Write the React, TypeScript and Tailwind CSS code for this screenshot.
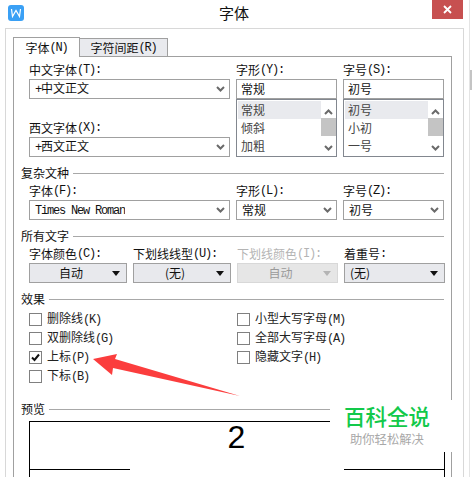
import type { ReactNode } from "react";

const simsun = "font-['Noto_Sans_CJK_SC','Liberation_Mono',sans-serif]";

// latin part of a label is tall and narrow, like the bitmap font in the dialog
const Key = ({ children }: { children: ReactNode }) => (
  <span className="font-['Liberation_Mono',monospace] text-[12px] tracking-[-1.2px]">{children}</span>
);

const Label = ({ text, hot, muted }: { text: string; hot?: string; muted?: boolean }) => (
  <div className={`h-[12px] flex items-center text-[12px] leading-[12px] whitespace-nowrap ${muted ? "text-[#b4b4b4]" : "text-[#111]"}`}>
    {text}
    {hot && <Key>({hot})</Key>}
    <Key>:</Key>
  </div>
);

const Chevron = () => (
  <svg width="9" height="6" viewBox="0 0 9 6" className="shrink-0">
    <path d="M1 1l3.5 3.5L8 1" fill="none" stroke="#6a6a6a" strokeWidth="2" />
  </svg>
);

const Select = ({ children, className = "" }: { children: ReactNode; className?: string }) => (
  <div className={`h-[20px] flex items-center justify-between border border-[#a0a0a0] bg-white pl-[5px] pr-[4px] text-[12px] text-[#111] ${className}`}>
    <span className="truncate">{children}</span>
    <Chevron />
  </div>
);

const Dropdown = ({ value, muted, left }: { value: string; muted?: boolean; left?: boolean }) => (
  <div className={`relative h-[20px] flex items-center border text-[12px] ${muted ? "border-[#d8d8d8] bg-[#e6e6e6] text-[#9a9a9a]" : "border-[#a0a0a0] bg-[#e8e9ed] text-[#111]"} ${left ? "pl-[5px]" : "justify-center pr-[14px]"}`}>
    {value}
    <span className={`absolute right-[6px] top-[7px] w-0 h-0 border-x-[4px] border-x-transparent border-t-[5px] ${muted ? "border-t-[#b4b4b4]" : "border-t-[#111]"}`} />
  </div>
);

const Heading = ({ text }: { text: string }) => (
  <div className="h-[14px] flex items-center gap-[4px] text-[12px] text-[#111]">
    <span className="whitespace-nowrap">{text}</span>
    <div className="flex-1 h-px bg-[#a8a8a8]" />
  </div>
);

const ListBox = ({ items }: { items: string[] }) => (
  <div className="h-[58px] flex border border-[#82878f] pt-[1px] pl-[1px] text-[12px] text-[#444]">
    <div className="flex-1 flex flex-col">
      {items.map((item, i) => (
        <div key={item} className={`h-[18px] leading-[18px] pl-[3px] ${i === 0 ? "bg-[#e9eaee]" : ""}`}>
          {item}
        </div>
      ))}
    </div>
    <div className="w-[15px] flex flex-col items-center">
      <svg width="9" height="6" viewBox="0 0 9 6" className="mt-[8px]">
        <path d="M1 5l3.5-3.5L8 5" fill="none" stroke="#6a6a6a" strokeWidth="2" />
      </svg>
      <div className="w-[15px] h-[18px] mt-[3px] bg-[#c4c4c4]" />
      <div className="mt-[9px]">
        <Chevron />
      </div>
    </div>
  </div>
);

const Check = ({ text, hot, checked }: { text: string; hot: string; checked?: boolean }) => (
  <div className="h-[14px] flex items-center gap-[5px] text-[12px] text-[#222]">
    <div className="w-[13px] h-[13px] border border-[#808080] flex items-center justify-center shrink-0">
      {checked && (
        <svg width="9" height="9" viewBox="0 0 9 9">
          <path d="M1 4.5l2.5 2.5L8 1.5" fill="none" stroke="#111" strokeWidth="2" />
        </svg>
      )}
    </div>
    <span className="whitespace-nowrap">
      {text}
      <Key>({hot})</Key>
    </span>
  </div>
);

const App = () => {
  return (
    <div className={`relative w-[472px] h-[477px] overflow-hidden bg-white ${simsun}`}>
      {/* title bar */}
      <div className="relative h-[28px] flex items-center justify-center text-[15px] text-[#111] w-[468px]">
        <div className="absolute left-[8px] top-[5px] w-[16px] h-[16px] rounded-[3px] bg-[#3aa0f5] flex items-center justify-center">
          <svg width="12" height="10" viewBox="0 0 12 10">
            <path d="M1.5 1L2.5 8.5L6 2.5L9.5 8.5L10.5 1" fill="none" stroke="#fff" strokeWidth="1.2" />
          </svg>
        </div>
        <span className="-mt-[1px]">字体</span>
        <div className="absolute left-[432px] top-0 w-[31px] h-[19px] bg-[#c75050] flex items-center justify-center">
          <svg width="9" height="9" viewBox="0 0 9 9">
            <path d="M1 1l7 7M8 1l-7 7" stroke="#fff" strokeWidth="1.8" />
          </svg>
        </div>
      </div>

      <div className="ml-[5px] w-[459px] h-[449px] border-x border-t border-[#d8d8d8] pt-[7px] pl-[7px]">
        {/* tabs */}
        <div className="flex items-end h-[20px] text-[12px] text-[#111]">
          <div className="w-[67px] h-[20px] border-x border-t border-[#a0a0a0] bg-white flex items-center justify-center relative z-10 translate-y-px">
            字体<Key>(N)</Key>
          </div>
          <div className="w-[88px] h-[18px] border-r border-t border-[#a0a0a0] bg-[#e9eaee] flex items-center justify-center">
            字符间距<Key>(R)</Key>
          </div>
        </div>

        <div className="w-[439px] h-[422px] border border-[#a0a0a0] pl-[7px] pr-[7px] pt-[7px]">
          {/* font block */}
          <div className="grid grid-cols-[201px_101px_101px] gap-x-[6px] pl-[8px]">
            <div className="flex flex-col">
              <Label text="中文字体" hot="T" />
              <Select className="mt-[3px]"><Key>+</Key>中文正文</Select>
              <div className="mt-[23px]">
                <Label text="西文字体" hot="X" />
              </div>
              <Select className="mt-[3px]"><Key>+</Key>西文正文</Select>
            </div>
            <div className="flex flex-col">
              <Label text="字形" hot="Y" />
              <div className="mt-[3px] h-[20px] border border-[#a0a0a0] pl-[4px] text-[12px] leading-[18px] text-[#111]">常规</div>
              <ListBox items={["常规", "倾斜", "加粗"]} />
            </div>
            <div className="flex flex-col">
              <Label text="字号" hot="S" />
              <div className="mt-[3px] h-[20px] border border-[#a0a0a0] pl-[4px] text-[12px] leading-[18px] text-[#111]">初号</div>
              <ListBox items={["初号", "小初", "一号"]} />
            </div>
          </div>

          {/* complex script */}
          <div className="mt-[9px]">
            <Heading text="复杂文种" />
          </div>
          <div className="mt-[5px] grid grid-cols-[201px_101px_101px] gap-x-[6px] pl-[8px]">
            <div>
              <Label text="字体" hot="F" />
              <Select className="mt-[3px]">
                <Key>Times New Roman</Key>
              </Select>
            </div>
            <div>
              <Label text="字形" hot="L" />
              <Select className="mt-[3px]">常规</Select>
            </div>
            <div>
              <Label text="字号" hot="Z" />
              <Select className="mt-[3px]">初号</Select>
            </div>
          </div>

          {/* all text */}
          <div className="mt-[9px]">
            <Heading text="所有文字" />
          </div>
          <div className="mt-[5px] grid grid-cols-[98px_98px_101px_101px] gap-x-[6px] pl-[8px]">
            <div>
              <Label text="字体颜色" hot="C" />
              <div className="mt-[3px]"><Dropdown value="自动" /></div>
            </div>
            <div>
              <Label text="下划线线型" hot="U" />
              <div className="mt-[3px]"><Dropdown value="(无)" /></div>
            </div>
            <div>
              <Label text="下划线颜色" hot="I" muted />
              <div className="mt-[3px]"><Dropdown value="自动" muted /></div>
            </div>
            <div>
              <Label text="着重号" />
              <div className="mt-[3px]"><Dropdown value="(无)" left /></div>
            </div>
          </div>

          {/* effects */}
          <div className="mt-[9px]">
            <Heading text="效果" />
          </div>
          <div className="mt-[6px] grid grid-cols-[208px_1fr] pl-[8px]">
            <div className="flex flex-col gap-[5px]">
              <Check text="删除线" hot="K" />
              <Check text="双删除线" hot="G" />
              <Check text="上标" hot="P" checked />
              <Check text="下标" hot="B" />
            </div>
            <div className="flex flex-col gap-[5px]">
              <Check text="小型大写字母" hot="M" />
              <Check text="全部大写字母" hot="A" />
              <Check text="隐藏文字" hot="H" />
            </div>
          </div>

          {/* preview */}
          <div className="mt-[19px]">
            <Heading text="预览" />
          </div>
          <div className="ml-[8px] mt-[5px] w-[416px] h-[80px] border-x border-t border-black flex justify-between items-start">
            <div className="w-[100px] h-[48px] border-b border-black" />
            <div className="font-['Liberation_Sans',sans-serif] text-[32px] leading-[36px] -mt-[3px] -ml-[1px] text-black">2</div>
            <div className="w-[100px] h-[48px] border-b border-black" />
          </div>
        </div>
      </div>

      {/* scrollbar of the window behind the dialog */}
      <div className="absolute right-0 top-0 w-[3px] h-[477px] border-l border-[#e4e4e4]">
        <div className="mt-[70px] h-[20px] bg-[#c4c4c4]" />
      </div>

      {/* watermark */}
      <div className="absolute left-[330px] top-[400px] w-[122px] h-[52px] bg-white pl-[14px] pt-[3px]">
        <div className="text-[21.5px] leading-[26px] font-medium text-[#12c94a] whitespace-nowrap">百科全说</div>
        <div className="text-[12.3px] leading-[14px] text-[#a8a8a8] mt-[3px] pl-[6px] whitespace-nowrap">助你轻松解决</div>
      </div>

      {/* annotation arrow */}
      <svg className="absolute left-0 top-0 pointer-events-none" width="472" height="477" viewBox="0 0 472 477">
        <path d="M93 359L117 354L115 359L240 396L113 368L112 375Z" fill="#fb3d3d" />
      </svg>
    </div>
  );
};

export default App;
